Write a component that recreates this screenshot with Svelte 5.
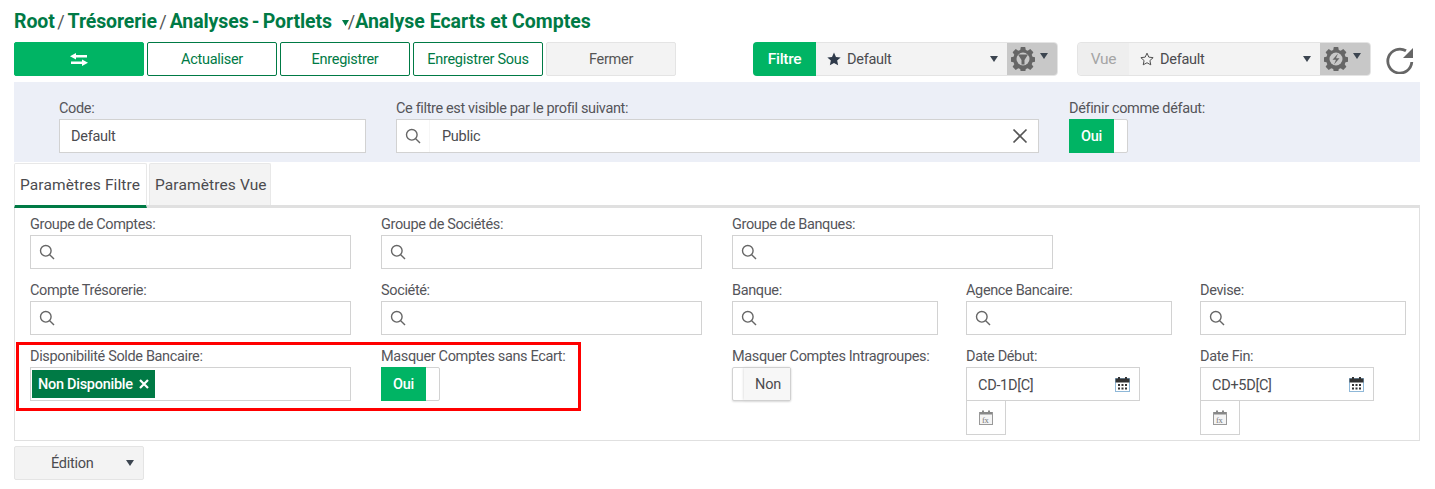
<script>
  const row1 = [
    { label: 'Groupe de Comptes:', w: 'wide' },
    { label: 'Groupe de Sociétés:', w: 'wide' },
    { label: 'Groupe de Banques:', w: 'wide' }
  ];
  const row2 = [
    { label: 'Compte Trésorerie:', w: 'wide' },
    { label: 'Société:', w: 'wide' },
    { label: 'Banque:', w: 'mid' },
    { label: 'Agence Bancaire:', w: 'mid' },
    { label: 'Devise:', w: 'mid' }
  ];
  const gearPath = 'M-2.2-12h4.4l.6 3 1.9.8 2.600-1.700 3.100 3.100-1.700 2.600.8 1.900 3 .6v4.400l-3 .6-.8 1.900 1.700 2.600-3.100 3.100-2.600-1.700-1.900.8-.6 3h-4.400l-.6-3-1.900-.8-2.600 1.700-3.100-3.100 1.700-2.600-.8-1.900-3-.6v-4.400l3-.6.8-1.900-1.700-2.600 3.100-3.100 2.600 1.700 1.900-.8z';
</script>

{#snippet search()}
  <svg class="search" width="16" height="16" viewBox="0 0 16 16" fill="none" stroke="#666" stroke-width="1.4">
    <circle cx="6.8" cy="6.8" r="5.3" /><path d="M10.7 10.7 15 15" />
  </svg>
{/snippet}

{#snippet caret()}
  <svg class="caret" width="8" height="6" viewBox="0 0 8 6"><path d="M0 0h8L4 6z" fill="#3c4550" /></svg>
{/snippet}

{#snippet gear(kind)}
  <span class="gearbox">
    <svg width="24" height="24" viewBox="-12 -12 24 24">
      <path d={gearPath} fill="#666" />
      <circle r="6.500" fill="#c8c8c8" />
      {#if kind === 'filter'}
        <path d="M-5-4.500H5L1.500 1v4.500h-3V1z" fill="#666" />
      {:else}
        <path d="M2-5.500-3.500.8H0L-2 5.500 3.500-.8H0z" fill="#666" />
      {/if}
    </svg>
    {@render caret()}
  </span>
{/snippet}

{#snippet cal()}
  <svg class="cal" width="15" height="15" viewBox="0 0 15 15">
    <rect x="0.5" y="1.5" width="14" height="13" fill="#fff" stroke="#8fb8d8" />
    <rect x="0.5" y="1.5" width="14" height="4" fill="#333" />
    <path d="M3 0h2v3H3zM10 0h2v3h-2z" fill="#333" />
    <path d="M3 7h2v2H3zM6.500 7h2v2h-2zM10 7h2v2h-2zM3 10.500h2v2H3zM6.500 10.500h2v2h-2zM10 10.500h2v2h-2z" fill="#333" />
  </svg>
{/snippet}

{#snippet fxIcon()}
  <div class="fx">
    <svg width="14" height="15" viewBox="0 0 14 15">
      <rect x=".5" y="2.500" width="13" height="12" fill="#f4f4f4" stroke="#999" />
      <path d="M1 2h12v2.500H1zM3 .5h2V3H3zM9 .5h2V3H9z" fill="#888" />
      <text x="3" y="12.500" class="fxt">fx</text>
    </svg>
  </div>
{/snippet}

<div class="page">
  <h1>
    <span>Root</span><i>/</i><span>Trésorerie</span><i>/</i><span class="squeezed">Analyses - Portlets</span>
    <svg class="crumb" width="7" height="6" viewBox="0 0 7 6"><path d="M0 0h7L3.500 6z" fill="#007a45" /></svg><i class="tight">/</i><span class="last-crumb">Analyse Ecarts et Comptes</span>
  </h1>

  <div class="toolbar">
    <div class="actions">
      <button class="btn solid" aria-label="Basculer">
        <svg width="18" height="13" viewBox="0 0 18 13" fill="#fff">
          <path d="M6 0v2h11v2.500H6v2L0 3.250zM12 6.500v2H1V11h11v2l6-3.250z" />
        </svg>
      </button>
      <button class="btn outline">Actualiser</button>
      <button class="btn outline">Enregistrer</button>
      <button class="btn outline">Enregistrer Sous</button>
      <button class="btn muted">Fermer</button>
    </div>

    <div class="selector one">
      <span class="tag on">Filtre</span>
      <span class="choice">
        <svg width="14" height="14" viewBox="0 0 24 24"><path d="m12 1 3.400 7.400 8 .9-6 5.400 1.700 8L12 18.700 4.900 22.700l1.700-8-6-5.400 8-.9z" fill="#2f3a4a" /></svg>
        <span>Default</span>
        {@render caret()}
      </span>
      {@render gear('filter')}
    </div>

    <div class="selector two">
      <span class="tag off">Vue</span>
      <span class="choice">
        <svg width="14" height="14" viewBox="0 0 24 24"><path d="m12 2 3.100 6.800 7.400.9-5.500 5 1.500 7.300L12 18.400 5.500 22 7 14.700l-5.500-5 7.400-.9z" fill="none" stroke="#444" stroke-width="1.600" /></svg>
        <span>Default</span>
        {@render caret()}
      </span>
      {@render gear('bolt')}
    </div>

    <svg class="refresh" width="28" height="29" viewBox="0 0 28 29" fill="none" aria-label="Rafraîchir">
      <path d="M20 5.800A12 12 0 1 0 25.800 17" stroke="#666" stroke-width="2.800" />
      <path d="M17 13h10V3z" fill="#666" />
    </svg>
  </div>

  <div class="panel">
    <div class="f code">
      <span class="lab">Code:</span>
      <div class="input padded">Default</div>
    </div>
    <div class="f profile">
      <span class="lab">Ce filtre est visible par le profil suivant:</span>
      <div class="input lookup">
        <span class="lead">{@render search()}</span>
        <span class="grow">Public</span>
        <svg class="clear" width="16" height="16" viewBox="0 0 16 16"><path d="m1.500 1.500 13 13m0-13-13 13" stroke="#555" stroke-width="1.700" /></svg>
      </div>
    </div>
    <div class="f deflt">
      <span class="lab">Définir comme défaut:</span>
      <div class="toggle"><span class="yes">Oui</span></div>
    </div>
  </div>

  <div class="tabs">
    <div class="tab active">Paramètres Filtre</div>
    <div class="tab">Paramètres Vue</div>
  </div>

  <div class="content">
    <div class="row">
      {#each row1 as item}
        <div class="f {item.w}">
          <span class="lab">{item.label}</span>
          <div class="input">{@render search()}</div>
        </div>
      {/each}
    </div>
    <div class="row">
      {#each row2 as item}
        <div class="f {item.w}">
          <span class="lab">{item.label}</span>
          <div class="input">{@render search()}</div>
        </div>
      {/each}
    </div>
    <div class="row last">
      <div class="redbox"></div>
      <div class="f wide">
        <span class="lab">Disponibilité Solde Bancaire:</span>
        <div class="input chips">
          <span class="chip">Non Disponible
            <svg width="10" height="10" viewBox="0 0 10 10"><path d="m1 1 8 8m0-8-8 8" stroke="#fff" stroke-width="2.200" /></svg>
          </span>
        </div>
      </div>
      <div class="f wide">
        <span class="lab">Masquer Comptes sans Ecart:</span>
        <div class="toggle"><span class="yes">Oui</span></div>
      </div>
      <div class="f mid">
        <span class="lab">Masquer Comptes Intragroupes:</span>
        <div class="toggle offstate"><span class="no">Non</span></div>
      </div>
      <div class="f mid">
        <span class="lab">Date Début:</span>
        <div class="input date"><span class="grow">CD-1D[C]</span>{@render cal()}</div>
        {@render fxIcon()}
      </div>
      <div class="f mid">
        <span class="lab">Date Fin:</span>
        <div class="input date"><span class="grow">CD+5D[C]</span>{@render cal()}</div>
        {@render fxIcon()}
      </div>
    </div>
  </div>

  <button class="edition">
    <span>Édition</span>
    {@render caret()}
  </button>
</div>

<style>
  :global(body) {
    margin: 0;
    background: #fff;
  }
  .page {
    width: 1435px;
    height: 489px;
    box-sizing: border-box;
    padding: 11px 15px 0 14px;
    font-family: Roboto, "Liberation Sans", sans-serif;
    font-size: 14.5px;
    letter-spacing: -0.28px;
    color: #4b4b4f;
    overflow: hidden;
  }
  h1 {
    margin: 0;
    height: 22px;
    display: flex;
    align-items: center;
    font-size: 19.5px;
    line-height: 24px;
    font-weight: 700;
    letter-spacing: -0.1px;
    color: #007a45;
    white-space: nowrap;
  }
  .squeezed {
    word-spacing: -1.500px;
  }
  .last-crumb {
    letter-spacing: 0;
  }
  h1 i {
    font-style: normal;
    font-weight: 400;
    color: #555;
    margin: 0 3px 0 2.500px;
    font-size: 18px;
  }
  h1 i.tight {
    margin: 0 0 0 -1px;
  }
  .crumb {
    margin: 2px 0 0 10px;
  }
  .toolbar {
    margin-top: 9px;
    display: flex;
    align-items: center;
    height: 34px;
  }
  .actions {
    display: flex;
    gap: 3px;
    width: 739px;
  }
  .btn {
    width: 130px;
    height: 34px;
    box-sizing: border-box;
    border-radius: 2px;
    font: inherit;
    letter-spacing: inherit;
    padding: 0;
    display: flex;
    align-items: center;
    justify-content: center;
  }
  .solid {
    background: #00b464;
    border: 1px solid #00b464;
  }
  .outline {
    background: #fff;
    border: 1px solid #007a45;
    color: #007a45;
  }
  .muted {
    background: #f3f3f3;
    border: 1px solid #e4e4e4;
    color: #555;
  }
  .selector {
    display: flex;
    height: 34px;
    box-sizing: border-box;
    border: 1px solid #e4e4e4;
    border-radius: 4px;
    background: #f3f3f3;
  }
  .selector.one {
    width: 305px;
  }
  .selector.two {
    width: 294px;
    margin-left: 19px;
  }
  .tag {
    display: flex;
    align-items: center;
    justify-content: center;
    flex: none;
    border-radius: 4px 0 0 4px;
  }
  .tag.on {
    width: 63px;
    margin: -1px 0 -1px -1px;
    background: #00b464;
    color: #fff;
    font-weight: 500;
    font-size: 15.500px;
  }
  .tag.off {
    width: 51px;
    background: #eeeeee;
    color: #a5a5a5;
    font-size: 15.500px;
  }
  .choice {
    flex: 1;
    display: flex;
    align-items: center;
    gap: 6px;
    padding: 0 9px 0 11px;
    color: #4b4b4f;
  }
  .choice > span {
    flex: 1;
  }
  .gearbox {
    width: 50px;
    flex: none;
    background: #c8c8c8;
    display: flex;
    align-items: center;
    padding-left: 4px;
    gap: 5px;
    box-sizing: border-box;
    border-radius: 0 3px 3px 0;
  }
  .gearbox .caret {
    margin-top: -7px;
  }
  .refresh {
    margin-left: 15px;
  }
  .panel {
    margin-top: 6px;
    height: 80px;
    background: #eceff7;
    display: flex;
    box-sizing: border-box;
    padding: 15px 0 0 45px;
    gap: 30px;
  }
  .f {
    display: flex;
    flex-direction: column;
    flex: none;
  }
  .lab {
    height: 22px;
    line-height: 23px;
    white-space: nowrap;
    color: #55555a;
    letter-spacing: -0.36px;
  }
  .code { width: 307px; }
  .profile { width: 643px; }
  .input {
    height: 34px;
    box-sizing: border-box;
    background: #fff;
    border: 1px solid #d2d2d2;
    display: flex;
    align-items: center;
    padding-left: 8px;
  }
  .input.padded {
    padding-left: 11px;
  }
  .lookup {
    padding-left: 0;
    padding-right: 10px;
  }
  .lead {
    width: 24px;
    height: 100%;
    flex: none;
    display: flex;
    align-items: center;
    padding-left: 8px;
    margin-right: 12px;
    border-right: 1px solid #f6f6f6;
  }
  .grow {
    flex: 1;
  }
  .toggle {
    width: 59px;
    height: 34px;
    box-sizing: border-box;
    border: 1px solid #d2d2d2;
    border-radius: 2px;
    background: #fff;
    display: flex;
  }
  .yes {
    width: 45px;
    margin: -1px 0 -1px -1px;
    background: #00b464;
    color: #fff;
    font-weight: 500;
    display: flex;
    align-items: center;
    justify-content: center;
  }
  .offstate {
    justify-content: flex-end;
    box-shadow: 0 1px 2px #ddd;
  }
  .no {
    width: 46px;
    box-sizing: border-box;
    padding-left: 2px;
    background: #f7f7f7;
    display: flex;
    align-items: center;
    justify-content: center;
    box-shadow: 0 0 3px #ccc;
  }
  .tabs {
    margin-top: 1px;
    padding-left: 1px;
    display: flex;
    gap: 2px;
    height: 45px;
    box-sizing: border-box;
    border-bottom: 3px solid #e0e0e0;
  }
  .tab {
    height: 42px;
    line-height: 42px;
    box-sizing: border-box;
    border: 1px solid #e8e8e8;
    border-bottom: none;
    border-radius: 2px 2px 0 0;
    background: #f3f3f3;
    padding: 0 5px;
    width: 122px;
    white-space: nowrap;
    color: #4b4b4f;
    font-size: 15.500px;
    letter-spacing: 0.12px;
  }
  .tab.active {
    background: #fff;
    width: 133px;
    height: 45px;
    margin-left: -1px;
    border-bottom: 3px solid #007a45;
  }
  .content {
    height: 233px;
    box-sizing: border-box;
    border: 1px solid #e0e0e0;
    border-top: none;
    padding: 5px 0 0 15px;
  }
  .row {
    display: flex;
    gap: 30px;
    height: 66px;
  }
  .row .mid + .mid {
    margin-left: -2px;
  }
  .row.last {
    position: relative;
    height: auto;
  }
  .wide { width: 321px; }
  .mid { width: 206px; }
  .row.last .mid:nth-last-child(-n+2) .input {
    width: 174px;
  }
  .search {
    display: block;
  }
  .redbox {
    position: absolute;
    left: -14px;
    top: -3px;
    width: 565px;
    height: 69px;
    box-sizing: border-box;
    border: 3px solid #f00;
    pointer-events: none;
  }
  .chips {
    padding-left: 1px;
  }
  .chip {
    height: 28px;
    background: #007a45;
    color: #fff;
    display: flex;
    align-items: center;
    gap: 6px;
    padding: 0 6px;
    font-weight: 500;
  }
  .date {
    padding: 2px 9px 0 11px;
  }
  .date .cal {
    margin-top: -2px;
  }
  .fx {
    width: 40px;
    height: 34px;
    box-sizing: border-box;
    border: 1px solid #d2d2d2;
    border-top: none;
    display: flex;
    align-items: center;
    justify-content: center;
  }
  .fxt {
    font-size: 8.500px;
    font-family: "Liberation Serif", serif;
    fill: #777;
  }
  .edition {
    margin-top: 5px;
    width: 130px;
    height: 34px;
    padding: 0 9px 0 36px;
    box-sizing: border-box;
    background: #f3f3f3;
    border: 1px solid #e4e4e4;
    border-radius: 2px;
    font: inherit;
    letter-spacing: inherit;
    color: #4b4b4f;
    display: flex;
    align-items: center;
    justify-content: space-between;
  }
</style>
